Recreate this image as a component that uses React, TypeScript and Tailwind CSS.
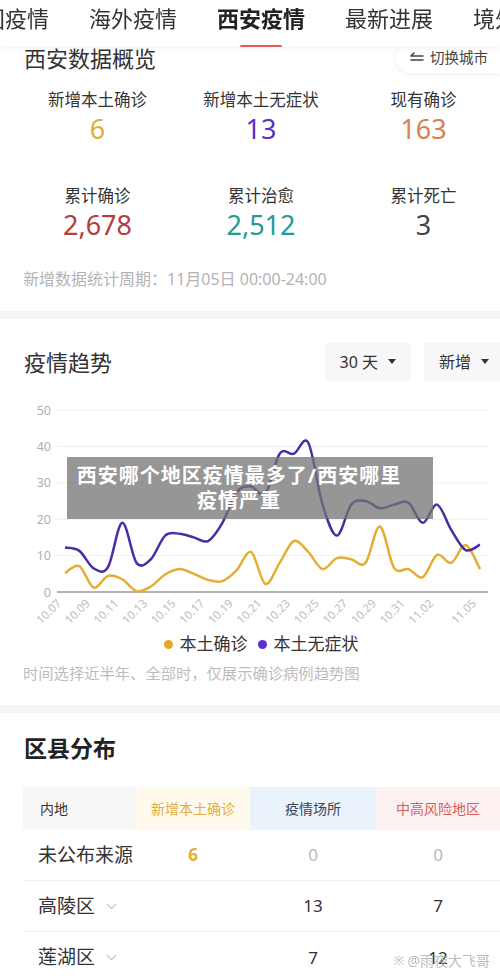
import { ChevronDown } from "lucide-react";

const FONT = { fontFamily: '"Noto Sans", "Noto Sans CJK SC", sans-serif' };

// chart frame, in page pixels (viewBox matches the page)
const X0 = 65;
const STEP = (480 - 65) / 29;
const Y0 = 591;
const PER = 3.64;

const PURPLE = [
  12.2, 11.3, 6.5, 6.8, 19, 8, 9, 15.5, 16, 15, 14, 19, 27.5, 29, 27, 38, 38, 41,
  24, 15.5, 24, 25, 23, 24, 24.5, 19, 24, 17, 11.5, 13,
];
const GOLD = [
  5.2, 7.1, 1.2, 4.4, 3.5, 0.2, 1.5, 4.8, 6.3, 5, 3.3, 3, 6, 11, 2.2, 8, 14, 11,
  6.3, 9.3, 9, 8, 18, 6.6, 6.3, 4.1, 10.2, 8, 12.9, 6.3,
];

const LABELS: [number, string][] = [
  [0, "10.07"],
  [2, "10.09"],
  [4, "10.11"],
  [6, "10.13"],
  [8, "10.15"],
  [10, "10.17"],
  [12, "10.19"],
  [14, "10.21"],
  [16, "10.23"],
  [18, "10.25"],
  [20, "10.27"],
  [22, "10.29"],
  [24, "10.31"],
  [26, "11.02"],
  [29, "11.05"],
];

function smooth(vals: number[]): string {
  const pts = vals.map((v, i) => [X0 + i * STEP, Y0 - v * PER]);
  let d = `M${pts[0][0]},${pts[0][1]}`;
  for (let i = 0; i < pts.length - 1; i++) {
    const p0 = pts[i - 1] ?? pts[i];
    const p1 = pts[i];
    const p2 = pts[i + 1];
    const p3 = pts[i + 2] ?? p2;
    const c1 = [p1[0] + (p2[0] - p0[0]) / 6, p1[1] + (p2[1] - p0[1]) / 6];
    const c2 = [p2[0] - (p3[0] - p1[0]) / 6, p2[1] - (p3[1] - p1[1]) / 6];
    d += ` C${c1[0]},${c1[1]} ${c2[0]},${c2[1]} ${p2[0]},${p2[1]}`;
  }
  return d;
}

function Tabs() {
  const tabs = ["国疫情", "海外疫情", "西安疫情", "最新进展", "境外疫情"];
  return (
    <div className="sticky top-0 z-10 h-[47px] bg-white overflow-hidden shadow-[0_2px_4px_rgba(0,0,0,0.04)]">
      <div className="flex gap-[40px] ml-[-17px] whitespace-nowrap">
        {tabs.map((t) => {
          const active = t === "西安疫情";
          return (
            <div key={t} className="flex flex-col items-center">
              <span
                className={`text-[22px] leading-[36px] ${
                  active ? "font-bold text-[#222]" : "text-[#333]"
                }`}
              >
                {t}
              </span>
              <span
                className={`mt-[9px] h-[3px] w-[42px] rounded-full ${
                  active ? "bg-[#e35a5a]" : "bg-transparent"
                }`}
              />
            </div>
          );
        })}
      </div>
    </div>
  );
}

function Stat({ label, value, color }: { label: string; value: string; color: string }) {
  return (
    <div className="flex flex-col items-center">
      <span className="text-[16.5px] leading-[22px] text-[#333]">{label}</span>
      <span className={`mt-[2px] text-[27px] leading-[32px] ${color}`}>{value}</span>
    </div>
  );
}

function Overview() {
  return (
    <div className="mt-[-5px] pb-[22px]">
      <div className="flex items-center justify-between">
        <span className="ml-[24px] text-[22px] leading-[32px] text-[#333]">西安数据概览</span>
        <div className="flex items-center gap-[6px] h-[30px] pl-[14px] pr-[12px] rounded-l-full bg-white shadow-[0_1px_6px_rgba(0,0,0,0.08)] text-[14.5px] text-[#444]">
          <svg width="14" height="12" viewBox="0 0 14 12">
            <path d="M1 4h12M4 1L1 4M1 8h12" stroke="#444" strokeWidth="1.6" fill="none" strokeLinecap="round" />
          </svg>
          切换城市
        </div>
      </div>
      <div className="mt-[15px] grid grid-cols-[165px_162px_163px] pl-[15px] gap-y-[40px]">
        <Stat label="新增本土确诊" value="6" color="text-[#e1ad34]" />
        <Stat label="新增本土无症状" value="13" color="text-[#5a2ec8]" />
        <Stat label="现有确诊" value="163" color="text-[#d9804d]" />
        <Stat label="累计确诊" value="2,678" color="text-[#b53c3f]" />
        <Stat label="累计治愈" value="2,512" color="text-[#1f9b98]" />
        <Stat label="累计死亡" value="3" color="text-[#444]" />
      </div>
      <p className="mt-[28px] ml-[23px] text-[16px] leading-[20px] text-[#b3b3b3]">
        新增数据统计周期：11月05日 00:00-24:00
      </p>
    </div>
  );
}

function Dropdown({ text }: { text: string }) {
  return (
    <div className="flex items-center gap-[10px] h-[38px] px-[15px] bg-[#f7f7f7] text-[16px] text-[#333]">
      {text}
      <svg width="8" height="6" viewBox="0 0 8 6">
        <path d="M0 0h8L4 5z" fill="#333" />
      </svg>
    </div>
  );
}

function Chart() {
  return (
    <svg width="500" height="234" viewBox="0 398 500 234" className="block">
      {[10, 20, 30, 40, 50].map((v) => (
        <line key={v} x1="57" x2="488" y1={Y0 - v * PER} y2={Y0 - v * PER} stroke="#eeeeee" strokeWidth="1" />
      ))}
      <line x1="57" x2="488" y1={Y0} y2={Y0} stroke="#9a9a9a" strokeWidth="1.5" />
      {[0, 10, 20, 30, 40, 50].map((v) => (
        <text key={v} x="51" y={Y0 - v * PER + 4.5} textAnchor="end" fontSize="12.5" fill="#b0b0b0">
          {v}
        </text>
      ))}
      {LABELS.map(([i, t]) => {
        const x = X0 + i * STEP - 3;
        return (
          <text
            key={t}
            x={x}
            y={603}
            textAnchor="end"
            fontSize="11.5"
            fill="#bdbdbd"
            transform={`rotate(-45 ${x} 603)`}
          >
            {t}
          </text>
        );
      })}
      <path d={smooth(GOLD)} fill="none" stroke="#e4ad34" strokeWidth="2.5" strokeLinejoin="round" />
      <path d={smooth(PURPLE)} fill="none" stroke="#4b2ca6" strokeWidth="2.5" strokeLinejoin="round" />
    </svg>
  );
}

function Trend() {
  return (
    <div className="relative pt-[24px] pb-[22px]">
      <div className="flex items-center">
        <span className="ml-[24px] text-[22px] leading-[38px] text-[#333]">疫情趋势</span>
        <div className="ml-auto mr-[-4px] flex gap-[13px]">
          <Dropdown text="30 天" />
          <Dropdown text="新增" />
        </div>
      </div>
      <div className="mt-[18px]">
        <Chart />
      </div>
      <div className="flex items-center justify-center gap-[10px] pl-[22px] text-[17px] leading-[22px] text-[#333]">
        <span className="flex items-center gap-[7px]">
          <span className="h-[9px] w-[9px] rounded-full bg-[#e5a823]" />
          本土确诊
        </span>
        <span className="flex items-center gap-[7px]">
          <span className="h-[9px] w-[9px] rounded-full bg-[#5a2fd0]" />
          本土无症状
        </span>
      </div>
      <p className="mt-[8px] ml-[23px] text-[15.3px] leading-[20px] text-[#bdbdbd]">
        时间选择近半年、全部时，仅展示确诊病例趋势图
      </p>
      <div className="absolute left-[67px] top-[138px] w-[366px] h-[62px] pr-[22px] bg-[rgba(115,115,115,0.75)] flex flex-col items-center justify-center text-white font-bold text-[20px] leading-[25px] tracking-[1px]">
        <span>西安哪个地区疫情最多了/西安哪里</span>
        <span>疫情严重</span>
      </div>
    </div>
  );
}

const ROWS = [
  { name: "未公布来源", a: "6", b: "0", c: "0", chevron: false },
  { name: "高陵区", a: "", b: "13", c: "7", chevron: true },
  { name: "莲湖区", a: "", b: "7", c: "12", chevron: true },
];

function District() {
  const cols = "grid grid-cols-[113px_114px_126px_124px]";
  return (
    <div className="relative pt-[19px] pl-[23px]">
      <h2 className="ml-[1px] text-[23px] leading-[32px] font-bold text-[#222]">区县分布</h2>
      <div className={`${cols} mt-[23px] h-[43px] text-[14px]`}>
        <div className="flex items-center pl-[17px] bg-[#f7f7f7] text-[#333]">内地</div>
        <div className="flex items-center justify-center bg-[#fffaec] text-[#e2ae3c]">新增本土确诊</div>
        <div className="flex items-center justify-center bg-[#eaf2fc] text-[#3a4252]">疫情场所</div>
        <div className="flex items-center justify-center bg-[#fdf0f0] text-[#d95f5f]">中高风险地区</div>
      </div>
      {ROWS.map((r, i) => (
        <div
          key={r.name}
          className={`${cols} h-[51px] items-center ${i < ROWS.length - 1 ? "border-b border-[#f0f0f0]" : ""}`}
        >
          <div className="flex items-center gap-[8px] pl-[15px] text-[19px] text-[#333] whitespace-nowrap">
            {r.name}
            {r.chevron ? <ChevronDown size={17} strokeWidth={1.5} color="#bdbdbd" /> : null}
          </div>
          <div className="text-center text-[17px] text-[#e2ad33] font-bold">{r.a}</div>
          <div className={`text-center text-[17px] ${r.b === "0" ? "text-[#b8b8b8]" : "text-[#333]"}`}>{r.b}</div>
          <div className={`text-center text-[17px] ${r.c === "0" ? "text-[#b8b8b8]" : "text-[#333]"}`}>{r.c}</div>
        </div>
      ))}
      <div className="absolute right-[10px] bottom-[12px] flex items-center gap-[3px] text-[14px] text-[rgba(170,170,170,0.8)] blur-[0.6px]">
        <span className="text-[13px]">※</span>
        <span>@雨夜大飞哥</span>
      </div>
    </div>
  );
}

export default function App() {
  return (
    <div className="w-[500px] bg-white overflow-hidden" style={FONT}>
      <Tabs />
      <Overview />
      <div className="h-[8px] bg-[#f5f5f5]" />
      <Trend />
      <div className="h-[8px] bg-[#f5f5f5]" />
      <District />
    </div>
  );
}
